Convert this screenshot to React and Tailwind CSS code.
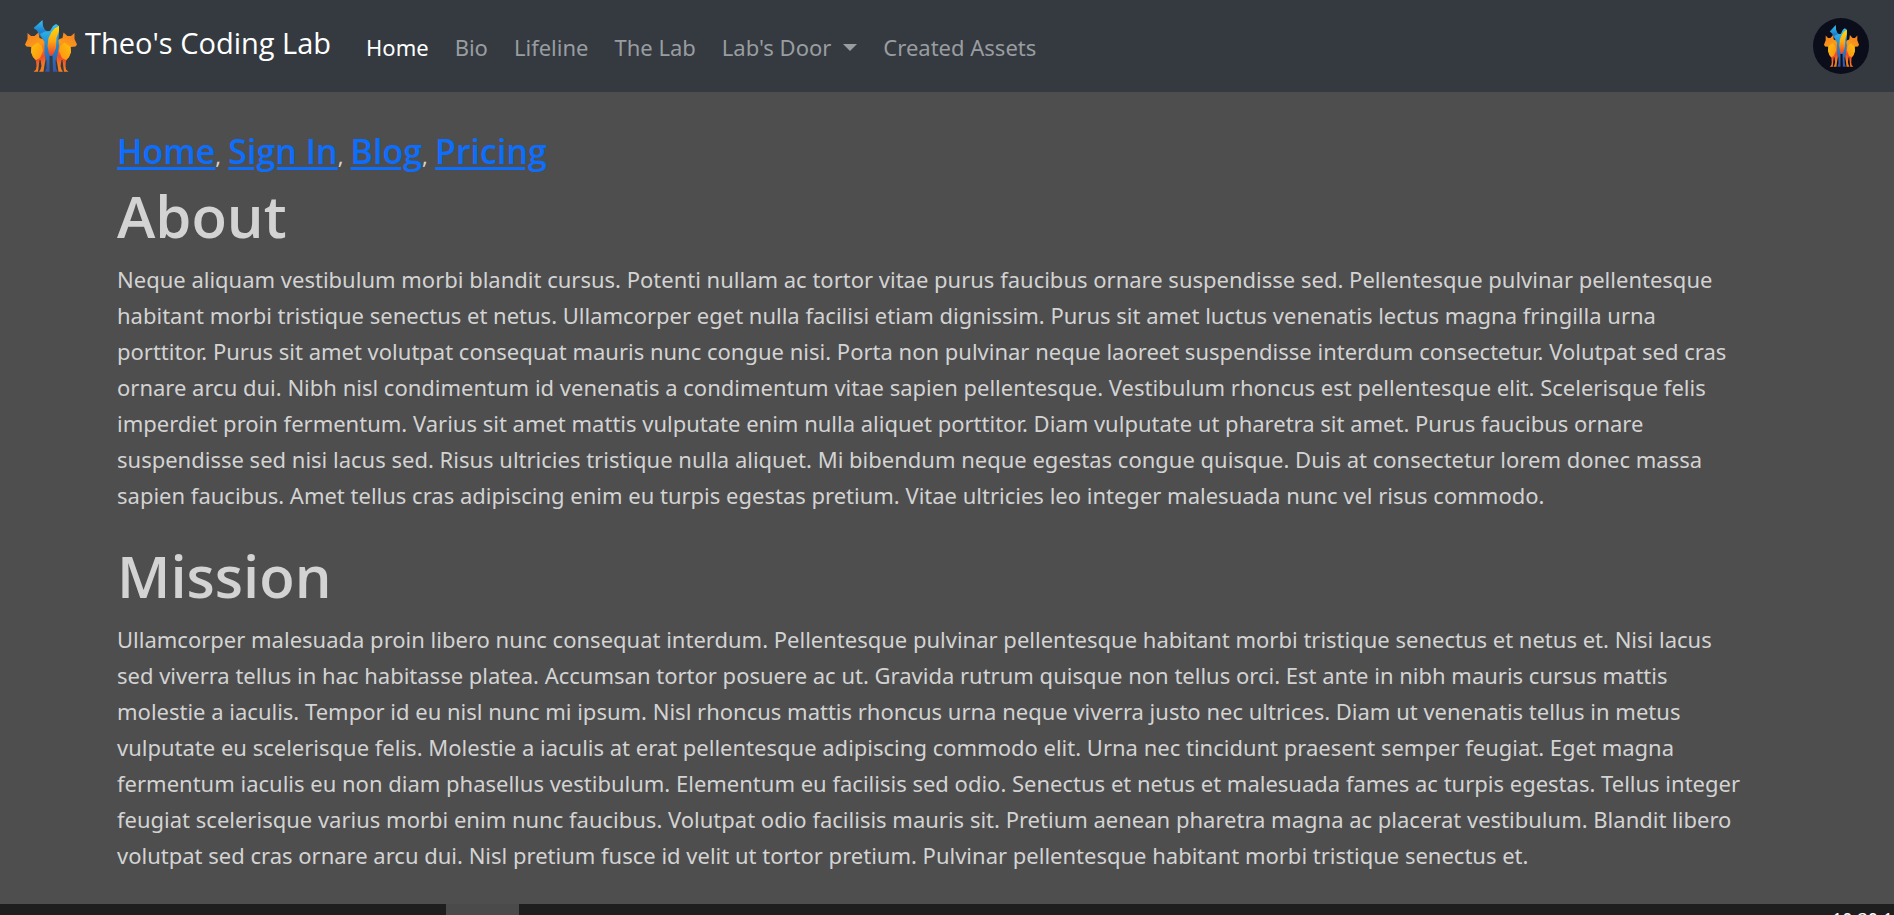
const about = [
  'Neque aliquam vestibulum morbi blandit cursus. Potenti nullam ac tortor vitae purus faucibus ornare suspendisse sed. Pellentesque pulvinar pellentesque',
  'habitant morbi tristique senectus et netus. Ullamcorper eget nulla facilisi etiam dignissim. Purus sit amet luctus venenatis lectus magna fringilla urna',
  'porttitor. Purus sit amet volutpat consequat mauris nunc congue nisi. Porta non pulvinar neque laoreet suspendisse interdum consectetur. Volutpat sed cras',
  'ornare arcu dui. Nibh nisl condimentum id venenatis a condimentum vitae sapien pellentesque. Vestibulum rhoncus est pellentesque elit. Scelerisque felis',
  'imperdiet proin fermentum. Varius sit amet mattis vulputate enim nulla aliquet porttitor. Diam vulputate ut pharetra sit amet. Purus faucibus ornare',
  'suspendisse sed nisi lacus sed. Risus ultricies tristique nulla aliquet. Mi bibendum neque egestas congue quisque. Duis at consectetur lorem donec massa',
  'sapien faucibus. Amet tellus cras adipiscing enim eu turpis egestas pretium. Vitae ultricies leo integer malesuada nunc vel risus commodo.',
];

const mission = [
  'Ullamcorper malesuada proin libero nunc consequat interdum. Pellentesque pulvinar pellentesque habitant morbi tristique senectus et netus et. Nisi lacus',
  'sed viverra tellus in hac habitasse platea. Accumsan tortor posuere ac ut. Gravida rutrum quisque non tellus orci. Est ante in nibh mauris cursus mattis',
  'molestie a iaculis. Tempor id eu nisl nunc mi ipsum. Nisl rhoncus mattis rhoncus urna neque viverra justo nec ultrices. Diam ut venenatis tellus in metus',
  'vulputate eu scelerisque felis. Molestie a iaculis at erat pellentesque adipiscing commodo elit. Urna nec tincidunt praesent semper feugiat. Eget magna',
  'fermentum iaculis eu non diam phasellus vestibulum. Elementum eu facilisis sed odio. Senectus et netus et malesuada fames ac turpis egestas. Tellus integer',
  'feugiat scelerisque varius morbi enim nunc faucibus. Volutpat odio facilisis mauris sit. Pretium aenean pharetra magna ac placerat vestibulum. Blandit libero',
  'volutpat sed cras ornare arcu dui. Nisl pretium fusce id velit ut tortor pretium. Pulvinar pellentesque habitant morbi tristique senectus et.',
];

const quickLinks = ['Home', 'Sign In', 'Blog', 'Pricing'];

function SideFox({ fill }) {
  return (
    <>
      <path
        fill={`url(#${fill}-body)`}
        d="M2.500 13 2.500 19 0 24.500 1.500 26.500 6.500 27 6 32 8 37 11 41 11.500 46 11 49.500 8.500 51.700H13L14.500 40 15.500 40 16.500 46 15.500 49.500 14 51.700H18.500L19.500 45 20.500 40V22L17.500 19 14.500 18 13.500 12.500 9.500 16 6 16z"
      />
      <path fill={`url(#${fill}-chest)`} d="M6.500 27 6 32 8 37 11 40 15 38 18 31 17 26 12.500 22.500z" />
    </>
  );
}

function FoxLogo({ id, className }) {
  return (
    <svg viewBox="0 0 52 52" preserveAspectRatio="none" className={className} aria-hidden="true">
      <defs>
        <linearGradient id={`${id}-body`} x1="0" y1="0" x2="0.3" y2="1">
          <stop offset="0.1" stopColor="#f58220" />
          <stop offset="0.45" stopColor="#fb9a1a" />
          <stop offset="0.8" stopColor="#ef4b2b" />
          <stop offset="1" stopColor="#f47b20" />
        </linearGradient>
        <linearGradient id={`${id}-chest`} x1="0" y1="0" x2="1" y2="1">
          <stop offset="0" stopColor="#ffc20a" />
          <stop offset="1" stopColor="#fb9015" />
        </linearGradient>
        <linearGradient id={`${id}-blue`} x1="0" y1="0" x2="0" y2="1">
          <stop offset="0" stopColor="#35c3f0" />
          <stop offset="0.5" stopColor="#1c83cf" />
          <stop offset="1" stopColor="#3a53a4" />
        </linearGradient>
        <linearGradient id={`${id}-gold`} x1="0" y1="0" x2="0" y2="1">
          <stop offset="0" stopColor="#ffd90a" />
          <stop offset="0.5" stopColor="#fda813" />
          <stop offset="1" stopColor="#ee3a2c" />
        </linearGradient>
      </defs>
      <path fill={`url(#${id}-blue)`} d="M17.500 0 12 5 8.500 8 12 10.500 14 15 20 22 27 14 20 10 18 6z" />
      <SideFox fill={id} />
      <g transform="translate(52 0) scale(-1 1)">
        <SideFox fill={id} />
      </g>
      <path
        fill={`url(#${id}-blue)`}
        d="M31 4 34 6 34 13 33.500 20 34 26 32.500 35 30.500 41 31 48 32.500 51.700H28L27.500 36H24.500L24.500 51.700H20L21.500 48 21.500 41 19.500 34 19.500 22 15 14 20 11.500 25 11 28 6z"
      />
      <path
        fill={`url(#${id}-gold)`}
        d="M34 6 29.500 8.500 26.500 12 23.500 18 22.500 26 24 34 26 36 28.500 34 31 28 31.500 18 34 11z"
      />
    </svg>
  );
}

function NavLink({ children, active }) {
  return (
    <a href="#" className={active ? 'text-white' : 'text-[#9a9da0]'}>
      {children}
    </a>
  );
}

function Section({ title, lines }) {
  return (
    <section className="pb-[27px]">
      <h1 className="mb-[9px] font-['Open_Sans','Noto_Sans',sans-serif] text-[58px] leading-[72px] font-semibold">
        {title}
      </h1>
      <p className="text-[22px] leading-9 whitespace-nowrap">
        {lines.map((line) => (
          <span key={line} className="block">
            {line}
          </span>
        ))}
      </p>
    </section>
  );
}

export default function App() {
  return (
    <div className="h-screen overflow-hidden bg-[#4e4e4e] font-['Noto_Sans','Open_Sans',sans-serif] text-[#d3d3d3]">
      <div className="flex h-full flex-col">
        <nav className="flex h-[92px] shrink-0 items-center bg-[#343a40] px-[25px] whitespace-nowrap">
          <a
            href="#"
            className="flex items-center gap-2 font-['Open_Sans','Noto_Sans',sans-serif] text-[29px] text-white"
          >
            <FoxLogo id="brand" className="size-[52px]" />
            <span className="pb-1.5">Theo's Coding Lab</span>
          </a>
          <div className="ml-[35px] flex items-center gap-[26px] pt-0.5 text-[22px]">
            <NavLink active>Home</NavLink>
            <NavLink>Bio</NavLink>
            <NavLink>Lifeline</NavLink>
            <NavLink>The Lab</NavLink>
            <button type="button" className="flex items-center gap-3 text-[#9a9da0]">
              Lab's Door
              <svg viewBox="0 0 14 7" className="h-[7px] w-[14px]" fill="currentColor" aria-hidden="true">
                <path d="M0 0h14L7 7z" />
              </svg>
            </button>
            <NavLink>Created Assets</NavLink>
          </div>
          <button
            type="button"
            aria-label="Account"
            className="ml-auto flex size-14 items-center justify-center rounded-full bg-[#0b0d1a]"
          >
            <FoxLogo id="avatar" className="h-[42px] w-[35px]" />
          </button>
        </nav>

        <main className="min-h-0 flex-1 overflow-hidden px-[117px] pt-[34px]">
          <div className="flex h-[54px] items-baseline text-[22px]">
            {quickLinks.map((label, i) => (
              <span key={label} className="mr-[7px]">
                <a
                  href="#"
                  className="font-['Open_Sans','Noto_Sans',sans-serif] text-[34px] leading-[50px] font-semibold text-[#0d6efd] underline decoration-[3px] underline-offset-[3px]"
                >
                  {label}
                </a>
                {i < quickLinks.length - 1 && ','}
              </span>
            ))}
          </div>
          <Section title="About" lines={about} />
          <Section title="Mission" lines={mission} />
        </main>

        <footer className="flex h-[11px] shrink-0 overflow-hidden bg-[#1e1e1e]">
          <div className="ml-[446px] w-[73px] bg-[#4a4a4a]" />
          <time className="ml-auto w-[62px] pt-[6px] text-lg leading-[18px] whitespace-nowrap text-white">10:30:14</time>
        </footer>
      </div>
    </div>
  );
}
